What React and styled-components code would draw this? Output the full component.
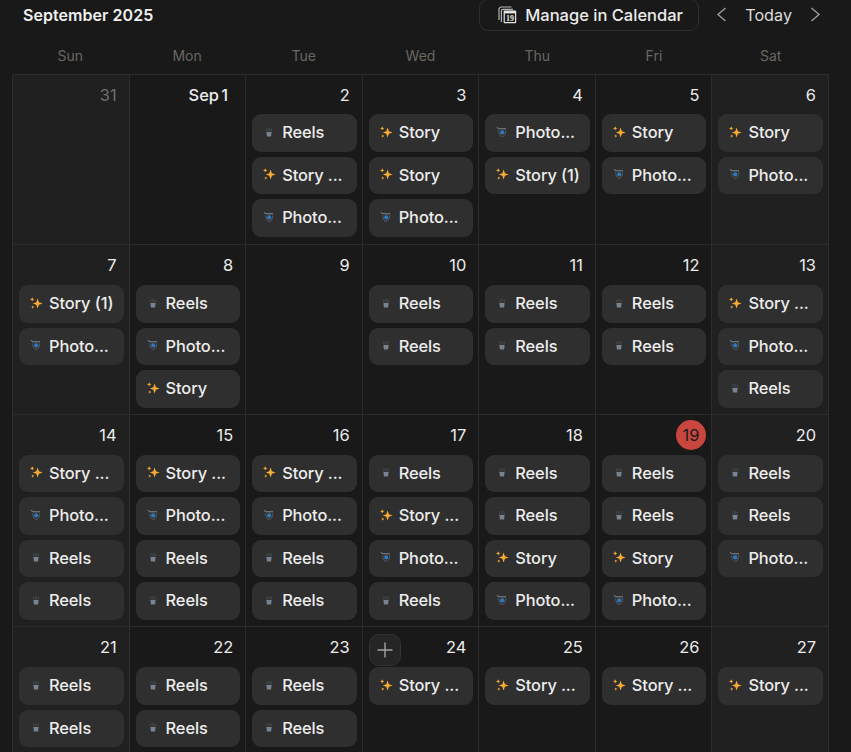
import React from "react";
import styled, { createGlobalStyle } from "styled-components";

const GlobalStyle = createGlobalStyle`
  html, body {
    margin: 0;
    padding: 0;
    background: #191919;
    overflow: hidden;
  }
  * {
    box-sizing: border-box;
  }
`;

const R = "reels";
const S = "story";
const SL = "storyLong";
const S1 = "storyOne";
const P = "photo";

const chipLabels = {
  reels: "Reels",
  story: "Story",
  storyLong: "Story ...",
  storyOne: "Story (1)",
  photo: "Photo...",
};

const weekdays = ["Sun", "Mon", "Tue", "Wed", "Thu", "Fri", "Sat"];

const weeks = [
  [
    { label: "31", muted: true, chips: [] },
    { label: "Sep 1", month: true, chips: [] },
    { label: "2", chips: [R, SL, P] },
    { label: "3", chips: [S, S, P] },
    { label: "4", chips: [P, S1] },
    { label: "5", chips: [S, P] },
    { label: "6", chips: [S, P] },
  ],
  [
    { label: "7", chips: [S1, P] },
    { label: "8", chips: [R, P, S] },
    { label: "9", chips: [] },
    { label: "10", chips: [R, R] },
    { label: "11", chips: [R, R] },
    { label: "12", chips: [R, R] },
    { label: "13", chips: [SL, P, R] },
  ],
  [
    { label: "14", chips: [SL, P, R, R] },
    { label: "15", chips: [SL, P, R, R] },
    { label: "16", chips: [SL, P, R, R] },
    { label: "17", chips: [R, SL, P, R] },
    { label: "18", chips: [R, R, S, P] },
    { label: "19", today: true, chips: [R, R, S, P] },
    { label: "20", chips: [R, R, P] },
  ],
  [
    { label: "21", chips: [R, R] },
    { label: "22", chips: [R, R] },
    { label: "23", chips: [R, R] },
    { label: "24", add: true, chips: [SL] },
    { label: "25", chips: [SL] },
    { label: "26", chips: [SL] },
    { label: "27", chips: [SL] },
  ],
];

function ReelsIcon() {
  return (
    <svg width="12" height="12" viewBox="0 0 12 12">
      <path d="M3.6 2.5v3M5.2 2v3.5M6.8 2v3.5M8.4 2.5v3" stroke="#45494d" strokeWidth="0.9" />
      <path d="M3.4 6h5.2L8.1 10.5H3.9Z" fill="#77838e" />
    </svg>
  );
}

function SparkleIcon() {
  return (
    <svg width="13" height="13" viewBox="0 0 13 13" fill="#f7ab35">
      <path d="M7.6 1.6 8.9 5.2 12.6 6.5 8.9 7.8 7.6 11.4 6.3 7.8 2.8 6.5 6.3 5.2Z" />
      <path d="M2.2 0.2 2.9 1.7 4.4 2.4 2.9 3.1 2.2 4.6 1.5 3.1 0 2.4 1.5 1.7Z" />
      <path d="M2.8 8.4 3.3 9.5 4.4 10 3.3 10.5 2.8 11.7 2.3 10.5 1.2 10 2.3 9.5Z" />
    </svg>
  );
}

function PhotoIcon() {
  return (
    <svg width="12" height="12" viewBox="0 0 12 12" fill="none">
      <path d="M0.8 1.4 3.2 2.8H10" stroke="#8b97a1" strokeWidth="0.9" />
      <path d="M2.6 4.4C3 8 4.2 10.4 6.2 10.4S9.4 8 9.8 4.4" stroke="#566069" strokeWidth="1" />
      <circle cx="6.2" cy="6.4" r="2.1" fill="#2f78bd" />
    </svg>
  );
}

const chipIcons = {
  reels: ReelsIcon,
  story: SparkleIcon,
  storyLong: SparkleIcon,
  storyOne: SparkleIcon,
  photo: PhotoIcon,
};

function CalendarIcon() {
  return (
    <svg width="19" height="18" viewBox="0 0 19 18" fill="none">
      <path d="M1 14V3.5C1 2 2 1 3.5 1H13.5" stroke="#b5b5b5" strokeWidth="1.2" />
      <path d="M3.4 16V5C3.4 4 4 3.4 5 3.4H15" stroke="#b5b5b5" strokeWidth="1.2" />
      <rect x="5.6" y="4.6" width="12.6" height="12.6" rx="1" fill="#e4e4e4" />
      <rect x="6.8" y="7.4" width="10.2" height="8.6" fill="#191919" />
      <text x="11.9" y="14.6" textAnchor="middle" fontFamily="Liberation Serif, serif" fontSize="8" fontWeight="700" fill="#e4e4e4">
        19
      </text>
    </svg>
  );
}

function Chevron({ dir }) {
  return (
    <svg width="11" height="15" viewBox="0 0 11 15" fill="none">
      <path d={dir === "left" ? "M9.5 1 2 7.5 9.5 14" : "M1.5 1 9 7.5 1.5 14"} stroke="#9b9b9b" strokeWidth="1.4" />
    </svg>
  );
}

function PlusIcon() {
  return (
    <svg width="16" height="16" viewBox="0 0 16 16" fill="none">
      <path d="M8 0.5V15.5M0.5 8H15.5" stroke="#a3a3a3" strokeWidth="1.4" />
    </svg>
  );
}

function Chip({ kind }) {
  const Icon = chipIcons[kind];
  return (
    <ChipBox>
      <ChipIcon>
        <Icon />
      </ChipIcon>
      <ChipLabel>{chipLabels[kind]}</ChipLabel>
    </ChipBox>
  );
}

function App() {
  return (
    <Page>
      <GlobalStyle />
      <Header>
        <MonthTitle>September 2025</MonthTitle>
        <ManageButton>
          <CalendarIcon />
          Manage in Calendar
        </ManageButton>
        <Pager>
          <Chevron dir="left" />
          <TodayLabel>Today</TodayLabel>
          <Chevron dir="right" />
        </Pager>
      </Header>

      <WeekdayRow>
        {weekdays.map((name) => (
          <Weekday key={name}>{name}</Weekday>
        ))}
      </WeekdayRow>

      <Board>
        {weeks.map((week, w) =>
          week.map((day, i) => (
            <Cell key={day.label} $weekend={i === 0 || i === 6} $first={w === 0}>
              {day.add && (
                <AddButton>
                  <PlusIcon />
                </AddButton>
              )}
              <DateRow $first={w === 0}>
                <DateLabel $muted={day.muted} $month={day.month} $today={day.today}>
                  {day.label}
                </DateLabel>
              </DateRow>
              <ChipList>
                {day.chips.map((kind, n) => (
                  <Chip key={n} kind={kind} />
                ))}
              </ChipList>
            </Cell>
          ))
        )}
      </Board>
    </Page>
  );
}

const Page = styled.div`
  width: 851px;
  height: 752px;
  overflow: hidden;
  background: #191919;
  color: #ececec;
  font-family: Inter, "Liberation Sans", sans-serif;
  padding: 0 22px 0 12px;
`;

const Header = styled.div`
  display: flex;
  align-items: center;
  height: 31px;
  margin-top: -1px;
  padding-left: 11px;
`;

const MonthTitle = styled.div`
  font-size: 16px;
  font-weight: 600;
  letter-spacing: 0.05px;
  color: #f0f0f0;
  margin-right: auto;
`;

const ManageButton = styled.div`
  display: flex;
  align-items: center;
  gap: 8px;
  width: 220px;
  height: 32px;
  padding-left: 18px;
  border: 1px solid #2f2f2f;
  border-radius: 9px;
  font-size: 16.5px;
  font-weight: 500;
  color: #ececec;
`;

const Pager = styled.div`
  display: flex;
  align-items: center;
  gap: 18px;
  margin-left: 17px;
  margin-right: 8px;
`;

const TodayLabel = styled.span`
  font-size: 16.2px;
  color: #dcdcdc;
`;

const WeekdayRow = styled.div`
  display: grid;
  grid-template-columns: repeat(7, 1fr);
  height: 44px;
  align-items: center;
  padding-top: 6px;
`;

const Weekday = styled.div`
  text-align: center;
  font-size: 14px;
  color: #6b6662;
`;

const Board = styled.div`
  display: grid;
  grid-template-columns: repeat(7, 1fr);
  border-right: 1px solid #2c2c2c;
`;

const Cell = styled.div`
  position: relative;
  display: flex;
  flex-direction: column;
  padding: 0 5px ${(p) => (p.$first ? "7.5px" : "6.25px")} 6px;
  border-top: 1px solid #2c2c2c;
  border-left: 1px solid #2c2c2c;
  background: ${(p) => (p.$weekend ? "#202020" : "#191919")};
`;

const AddButton = styled.div`
  position: absolute;
  top: 7px;
  left: 6px;
  width: 32px;
  height: 32px;
  display: flex;
  align-items: center;
  justify-content: center;
  background: #252525;
  border: 1px solid #333;
  border-radius: 10px;
`;

const DateRow = styled.div`
  display: flex;
  justify-content: flex-end;
  align-items: center;
  height: ${(p) => (p.$first ? "39px" : "40px")};
  padding-right: 7px;
`;

const DateLabel = styled.span`
  position: relative;
  z-index: 0;
  font-size: 16.4px;
  font-weight: ${(p) => (p.$month ? 500 : 400)};
  margin-right: ${(p) => (p.$month ? "5px" : "0")};
  word-spacing: ${(p) => (p.$month ? "-2px" : "0")};
  color: ${(p) => (p.$muted ? "#6e6e6e" : p.$today ? "#1c1c1c" : "#ececec")};

  ${(p) =>
    p.$today &&
    `
    &::before {
      content: "";
      position: absolute;
      z-index: -1;
      top: 50%;
      right: -7px;
      width: 30px;
      height: 30px;
      margin-top: -15px;
      border-radius: 50%;
      background: #c9463f;
    }
  `}
`;

const ChipList = styled.div`
  display: flex;
  flex-direction: column;
  gap: 5px;
`;

const ChipBox = styled.div`
  display: flex;
  align-items: center;
  height: 37.5px;
  padding: 0 0 1.5px 11px;
  gap: 6px;
  background: #2f2f2f;
  border-radius: 9px;
  overflow: hidden;
`;

const ChipIcon = styled.span`
  display: flex;
  flex: none;
  width: 13px;
  height: 13px;
`;

const ChipLabel = styled.span`
  font-size: 16.4px;
  font-weight: 500;
  letter-spacing: -0.1px;
  color: #ededed;
  white-space: nowrap;
`;

export default App;
